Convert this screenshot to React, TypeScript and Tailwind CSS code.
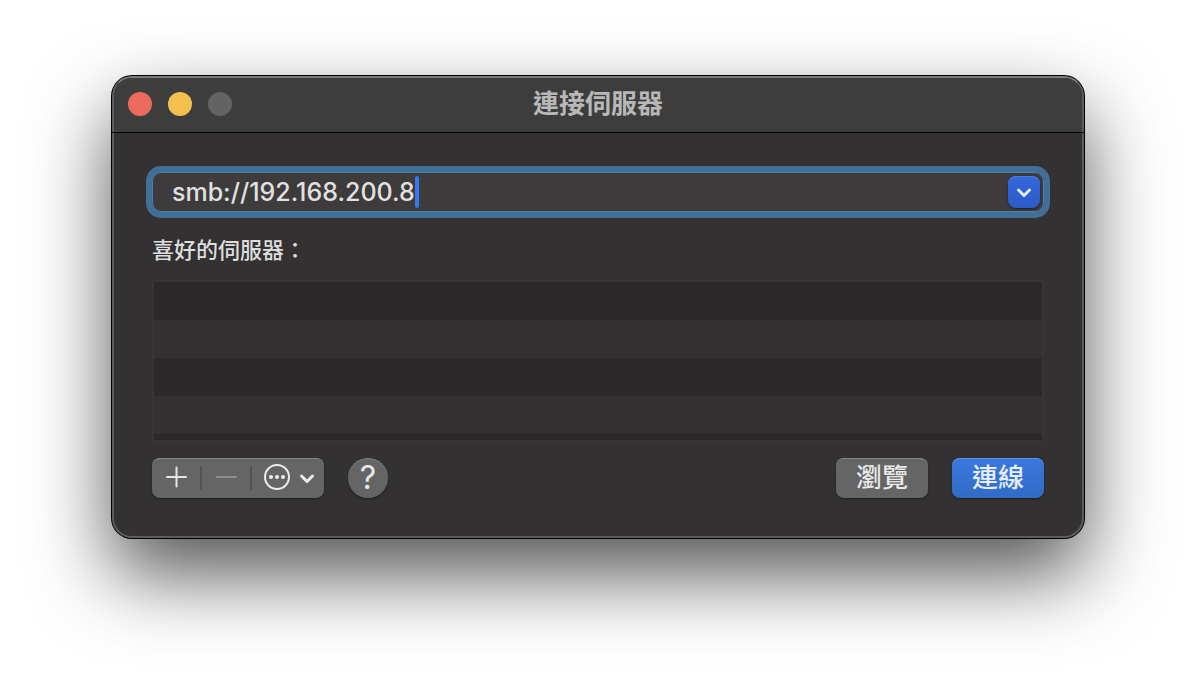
import React, { useState } from 'react';
import clsx from 'clsx';

const ROWS = [0, 1, 2, 3, 4];

const TitleBar: React.FC<{ title: string }> = ({ title }) => (
  <header className="h-[54px] pb-0.5 grid grid-cols-[1fr_auto_1fr] items-center rounded-t-[18px] bg-[#3d3d3d]">
    <div className="flex gap-4 pl-3.5">
      <button aria-label="關閉" className="size-6 rounded-full bg-[#ed6a5f]" />
      <button aria-label="縮到最小" className="size-6 rounded-full bg-[#f5bf4f]" />
      <button aria-label="縮放" disabled className="size-6 rounded-full bg-[#636363]" />
    </div>
    <h1 className="text-[26px] leading-8 font-bold text-[#b8b8b8]">{title}</h1>
  </header>
);

const Divider: React.FC = () => <span className="w-0.5 h-6 bg-[#525252]" />;

const App: React.FC = () => {
  const [address, setAddress] = useState('smb://192.168.200.8');

  return (
    <main className="min-h-screen bg-white px-28 py-19 font-['Inter','Noto_Sans_CJK_TC',sans-serif]">
      <section className="rounded-[20px] border-2 border-[#5e5d5e] border-t-[#7b7b7b] bg-[#333132] shadow-[0_0_0_1px_#000,0_36px_80px_rgba(0,0,0,0.68)]">
        <TitleBar title="連接伺服器" />
        <div className="-mx-0.5 h-px bg-black" />

        <form className="px-[38px] pt-[33px] pb-[38px]" onSubmit={(e) => e.preventDefault()}>
          <div className="-mx-1.5 h-[52px] flex items-center justify-between rounded-[15px] border-6 border-[#426f98] bg-[#3d3b3c] pl-5 pr-1 shadow-[inset_0_0_0_1px_#4f80ab]">
            <label className="flex-1 flex items-center">
              <input
                type="text"
                aria-label="伺服器位址"
                value={address}
                onChange={(e) => setAddress(e.target.value)}
                className="field-sizing-content h-8 text-[25px] leading-8 font-medium text-[#e2e1e2] caret-transparent outline-none"
              />
              <span className="w-1 h-8 rounded-sm bg-[#3478f6]" />
            </label>
            <button
              type="button"
              aria-label="最近使用的伺服器"
              className="size-8 rounded-lg bg-linear-to-b from-[#3368dc] to-[#2b5bc6] shadow-[0_1px_2px_rgba(0,0,0,0.5),inset_0_1px_0_#4c7de3]"
            >
              <svg viewBox="0 0 32 32" className="size-8" fill="none" stroke="#e4ebfa" strokeWidth="3" strokeLinecap="round" strokeLinejoin="round">
                <path d="M10.5 14 16 19.5 21.5 14" />
              </svg>
            </button>
          </div>

          <h2 className="mt-[18px] text-[22px] leading-7 font-medium text-[#dedddd]">喜好的伺服器：</h2>

          <ul aria-label="喜好的伺服器" className="mt-4 h-[162px] overflow-hidden border-2 border-[#363435]">
            {ROWS.map((row) => (
              <li key={row} className={clsx('h-[38px]', row % 2 === 0 ? 'bg-[#2a2829]' : 'bg-[#333132]')} />
            ))}
          </ul>

          <div className="mt-4 flex items-center justify-between">
            <div className="flex gap-6">
              <div className="flex items-center rounded-lg bg-[#656565] shadow-[0_1px_2px_rgba(0,0,0,0.4),inset_0_1px_0_#858585]">
                <button type="button" aria-label="加入" className="w-12 h-10">
                  <svg viewBox="0 0 48 40" className="w-12 h-10" fill="none" stroke="#e6e6e6" strokeWidth="2" strokeLinecap="round">
                    <path d="M15 19h19M24.5 9.5v19" />
                  </svg>
                </button>
                <Divider />
                <button type="button" aria-label="移除" disabled className="w-12 h-10">
                  <svg viewBox="0 0 48 40" className="w-12 h-10" fill="none" stroke="#8e8e8e" strokeWidth="2" strokeLinecap="round">
                    <path d="M15 19h19" />
                  </svg>
                </button>
                <Divider />
                <button type="button" aria-label="更多選項" className="w-18 h-10">
                  <svg viewBox="0 0 72 40" className="w-18 h-10" fill="none" stroke="#ececec" strokeLinecap="round" strokeLinejoin="round">
                    <circle cx="25" cy="19" r="12" strokeWidth="2" />
                    <g fill="#ececec" stroke="none">
                      <circle cx="19" cy="19" r="2" />
                      <circle cx="25" cy="19" r="2" />
                      <circle cx="31" cy="19" r="2" />
                    </g>
                    <path d="M49.5 18 55 23.5 60.5 18" strokeWidth="3" />
                  </svg>
                </button>
              </div>
              <button
                type="button"
                aria-label="輔助說明"
                className="size-10 rounded-full bg-[#656565] text-[32px] leading-10 text-[#e8e8e8] shadow-[0_1px_2px_rgba(0,0,0,0.4),inset_0_1px_0_#7a7a7a]"
              >
                ?
              </button>
            </div>

            <div className="flex gap-6">
              <button
                type="button"
                className="h-10 px-5 rounded-lg bg-[#656565] text-[26px] leading-8 font-medium text-[#e8e8e8] shadow-[0_1px_2px_rgba(0,0,0,0.4),inset_0_1px_0_#858585]"
              >
                瀏覽
              </button>
              <button
                type="submit"
                className="h-10 px-5 rounded-lg bg-linear-to-b from-[#3b78de] to-[#326bc6] text-[26px] leading-8 font-medium text-[#e6eefb] shadow-[0_1px_2px_rgba(0,0,0,0.4),inset_0_1px_0_#5c92ea]"
              >
                連線
              </button>
            </div>
          </div>
        </form>
      </section>
    </main>
  );
};

export default App;
